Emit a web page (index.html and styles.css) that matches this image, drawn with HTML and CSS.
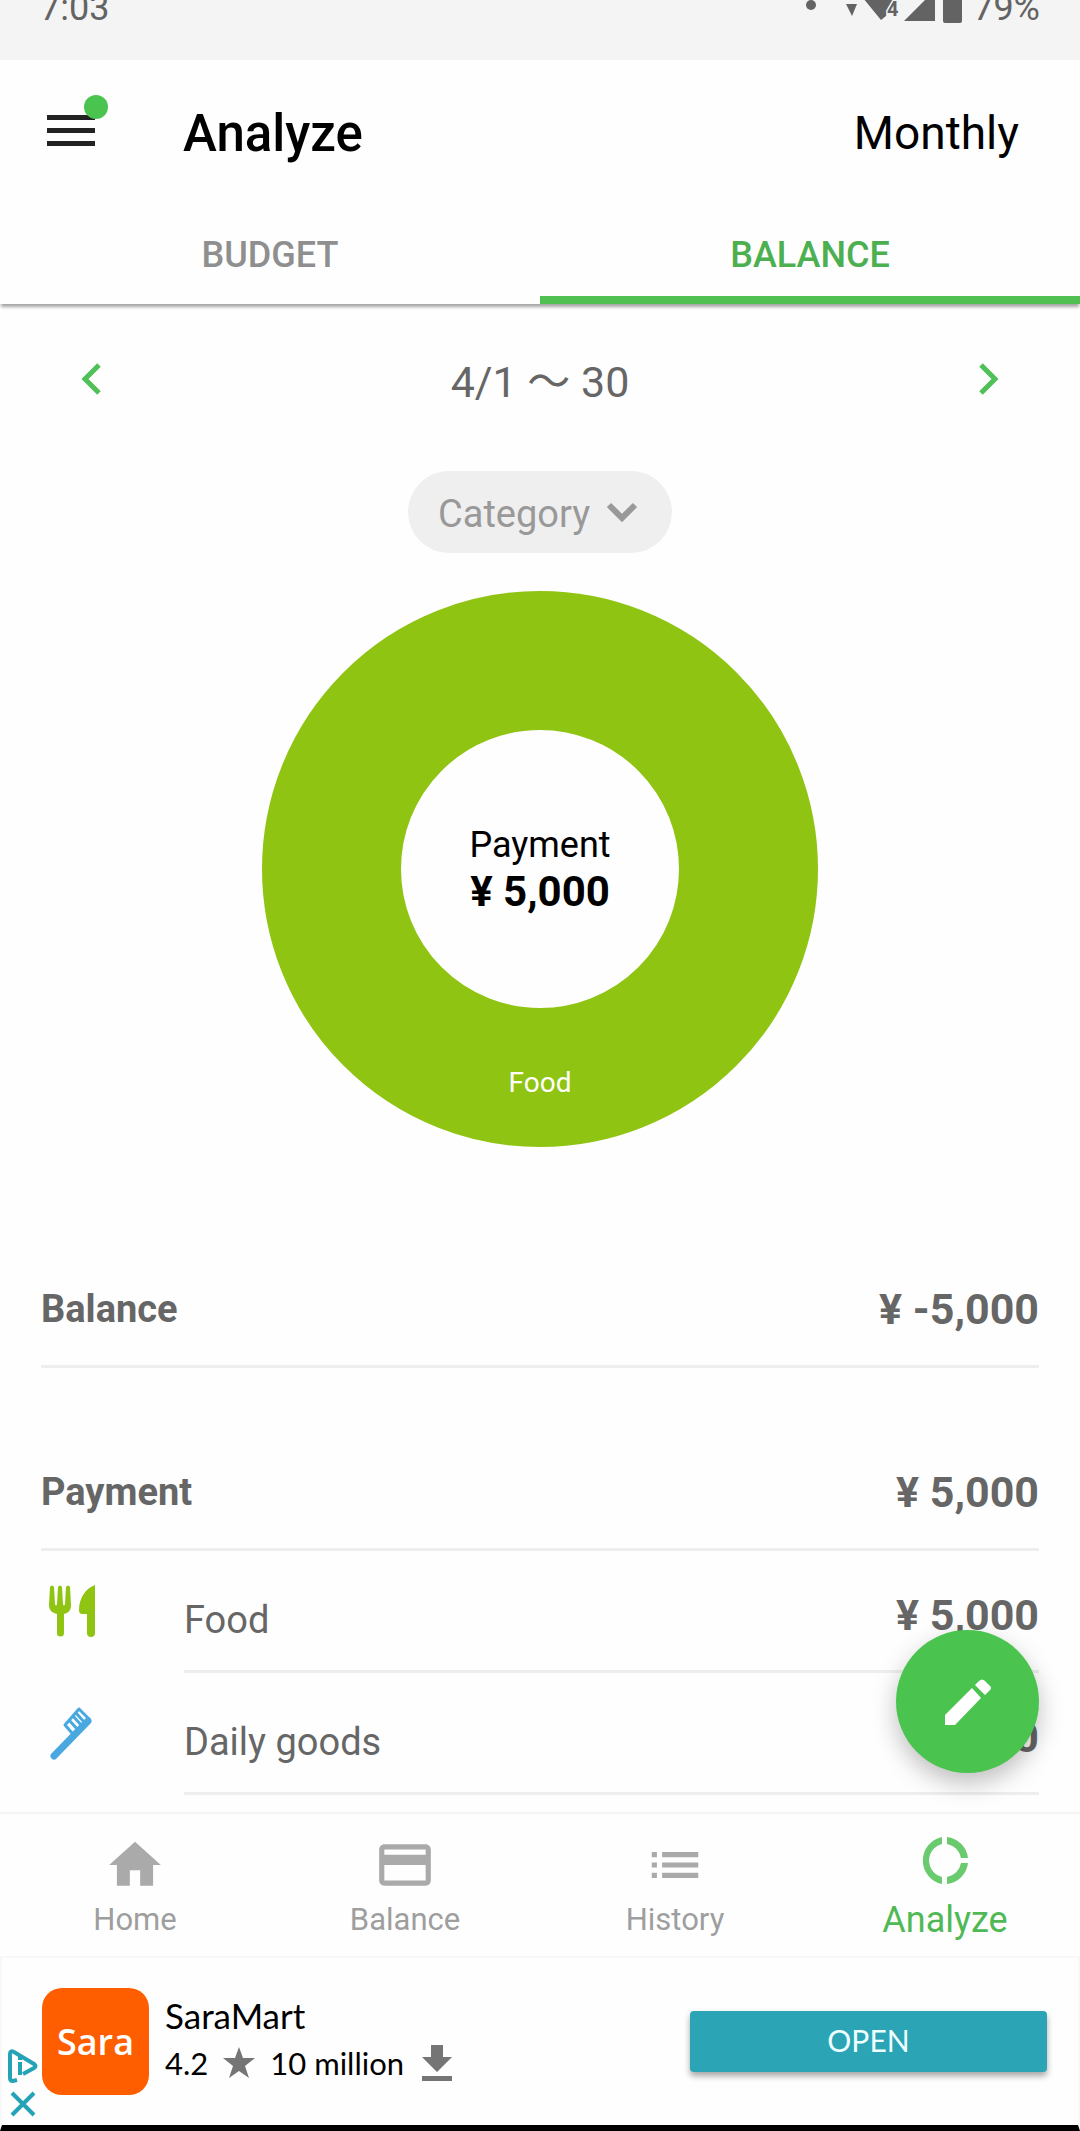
FILE: index.html
```html
<!DOCTYPE html>
<html lang="en">
<head>
    <meta charset="UTF-8">
    <meta name="viewport" content="width=device-width, initial-scale=1.0">
    <title>Analyze</title>
    <link rel="stylesheet" href="styles.css">
</head>
<body>
    <div class="status-bar">
        <span>7:03</span>
        <div class="status-right">
            <svg class="status-icons" viewBox="0 0 160 24" aria-hidden="true">
                <circle cx="6" cy="5" r="5"/>
                <path d="M41 4h11l-5 12z"/>
                <path d="M58 -2h36l-6 9-5 2-2 7-5 4z"/>
                <text x="82" y="16">4</text>
                <path d="M130 21H99L130 -10z"/>
                <path d="M138 -4h19v25a2 2 0 0 1-2 2h-15a2 2 0 0 1-2-2z"/>
            </svg>
            <span>79%</span>
        </div>
    </div>

    <header class="app-header">
        <button class="menu-btn" aria-label="Menu">
            <svg viewBox="0 0 48 48"><path d="M0 6h48v5H0zM0 19h48v5H0zM0 32h48v5H0z"/></svg>
            <span class="badge"></span>
        </button>
        <h1>Analyze</h1>
        <button class="range-btn">Monthly</button>
    </header>

    <div class="tabs" role="tablist">
        <button class="tab" role="tab" aria-selected="false">BUDGET</button>
        <button class="tab active" role="tab" aria-selected="true">BALANCE</button>
    </div>

    <main>
        <div class="period">
            <button aria-label="Previous">
                <svg viewBox="0 0 64 64"><path d="M40 19 26 33l14 14"/></svg>
            </button>
            <span>4/1 〜 30</span>
            <button aria-label="Next">
                <svg viewBox="0 0 64 64"><path d="M24 19l14 14-14 14"/></svg>
            </button>
        </div>

        <div class="group-by">
            <select aria-label="Group by">
                <option>Category</option>
            </select>
            <svg viewBox="0 0 32 20" aria-hidden="true"><path d="M3 3l13 13L29 3"/></svg>
        </div>

        <div class="donut">
            <span class="donut-title">Payment</span>
            <strong class="donut-total">¥ 5,000</strong>
            <span class="donut-label">Food</span>
        </div>

        <section class="summary">
            <h2>Balance</h2>
            <strong>¥ -5,000</strong>
        </section>
        <section class="summary">
            <h2>Payment</h2>
            <strong>¥ 5,000</strong>
        </section>

        <ul class="categories">
            <li>
                <svg viewBox="0 0 64 64" aria-hidden="true">
                    <path fill="#8fc412" d="M9 7q2-3 4 0l1 17q1 3 2 0l1-17q2-3 4 0l1 17q1 3 2 0l1-17q2-3 4 0l1 18c0 6-3 8-7 9v19a3 3 0 0 1-7 0V34c-4-1-8-3-8-9z"/>
                    <path fill="#8fc412" d="M54 5v48a3 3 0 0 1-8 0V34h-5q-3 0-3-4C38 18 45 8 54 5z"/>
                </svg>
                <div class="category">
                    <span>Food</span>
                    <strong>¥ 5,000</strong>
                </div>
            </li>
            <li>
                <svg viewBox="0 0 64 64" aria-hidden="true">
                    <path fill="none" stroke="#4aa8e0" stroke-width="7" stroke-linecap="round" d="M13 54 47 19"/>
                    <path fill="none" stroke="#4aa8e0" stroke-width="3" stroke-linejoin="round" d="M31 31 24 23 38 7 49 18M28 18l9 10M32 14l9 10M35 11l9 10"/>
                </svg>
                <div class="category">
                    <span>Daily goods</span>
                    <strong>¥ 0</strong>
                </div>
            </li>
        </ul>

        <button class="fab" aria-label="Add entry">
            <svg viewBox="0 0 64 64"><path d="M9 55V45L36 18l9 10-26 27zM39 15l4-4q3-3 6 0l5 5q2 2 0 4l-5 5z"/></svg>
        </button>
    </main>

    <nav class="bottom-nav">
        <a href="#home">
            <svg viewBox="0 0 24 24"><path d="M10 20v-6h4v6h5v-8h3L12 3 2 12h3v8z"/></svg>
            Home
        </a>
        <a href="#balance">
            <svg viewBox="0 0 24 24"><path d="M20 4H4c-1.100 0-2 .9-2 2v12c0 1.100.9 2 2 2h16c1.100 0 2-.9 2-2V6c0-1.100-.9-2-2-2zm0 14H4v-6h16v6zm0-10H4V6h16v2z"/></svg>
            Balance
        </a>
        <a href="#history">
            <svg viewBox="0 0 24 24"><path d="M3 13h2v-2H3v2zm0 4h2v-2H3v2zm0-8h2V7H3v2zm4 4h14v-2H7v2zm0 4h14v-2H7v2zM7 7v2h14V7H7z"/></svg>
            History
        </a>
        <a href="#analyze" class="active">
            <svg viewBox="0 0 62 62"><path d="M28 3v7a17 17 0 0 0 0 33v7a24 24 0 0 1 0-47zM33 3a24 24 0 0 1 21 21h-7a17 17 0 0 0-14-14zM54 29a24 24 0 0 1-21 21v-7a17 17 0 0 0 14-14z"/></svg>
            Analyze
        </a>
    </nav>

    <aside class="ad">
        <div class="ad-marks">
            <a href="#adchoices" aria-label="AdChoices">
                <svg viewBox="0 0 30 34"><path d="M9 31l-4 1q-3 0-3-3V5q0-4 4-2l20 12q3 2 0 4L15 25"/><path d="M12 8v3M10 15h2v11"/></svg>
            </a>
            <button aria-label="Close ad">
                <svg viewBox="0 0 30 34"><path d="M4 6l22 22M26 6 4 28"/></svg>
            </button>
        </div>
        <div class="ad-logo">Sara</div>
        <div class="ad-text">
            <div>SaraMart</div>
            <div class="ad-stats">
                <span>4.2</span>
                <svg class="star" viewBox="0 0 34 34" aria-hidden="true"><path d="M17 1l4 11h12l-10 8 4 12-10-7-10 7 4-12L1 12h12z"/></svg>
                <span>10 million</span>
                <svg class="download" viewBox="0 0 30 36" aria-hidden="true"><path d="M9 0h12v12h9L15 27 0 12h9zM0 31h30v5H0z"/></svg>
            </div>
        </div>
        <button class="open-btn">OPEN</button>
    </aside>
</body>
</html>
```
FILE: styles.css
```css
* { box-sizing: border-box; }
body {
    display: flex;
    flex-direction: column;
    min-height: 100vh;
    margin: 0;
    background: #fefefe;
    color: #666;
    font-family: Roboto, "Noto Sans CJK JP", sans-serif;
}
button {
    padding: 0;
    border: none;
    background: none;
    color: inherit;
    font: inherit;
    cursor: pointer;
}
a { color: inherit; text-decoration: none; }
svg { display: block; }

.status-bar {
    display: flex;
    justify-content: space-between;
    height: 60px;
    padding: 0 40px;
    background: #f4f4f4;
    color: #636363;
    font-size: 36px;
    line-height: 16px;
}
.status-right { display: flex; gap: 8px; }
.status-icons { width: 160px; height: 24px; fill: #636363; }
.status-icons text {
    font-size: 20px;
    font-weight: 700;
    stroke: #f4f4f4;
    stroke-width: 3px;
    paint-order: stroke;
}

.app-header {
    display: flex;
    align-items: center;
    height: 146px;
    padding: 0 61px 0 47px;
    color: #000;
}
.menu-btn { position: relative; width: 48px; }
.menu-btn svg { width: 48px; height: 48px; fill: #222; }
.badge {
    position: absolute;
    top: -14px;
    right: -13px;
    width: 24px;
    height: 24px;
    border-radius: 50%;
    background: #4ac44f;
}
h1 {
    flex: 1;
    margin: 0 0 0 88px;
    font-size: 51px;
    font-weight: 500;
}
.range-btn { font-size: 46px; }

.tabs {
    display: flex;
    height: 98px;
    box-shadow: 0 4px 3px -1px rgba(0, 0, 0, 0.35);
}
.tab {
    flex: 1;
    border-top: 8px solid transparent;
    border-bottom: 8px solid transparent;
    color: #8f8f8f;
    font-size: 36px;
    font-weight: 500;
}
.tab.active { border-bottom-color: #50c053; color: #4caf50; }

main { position: relative; flex: 1; padding: 15px 41px 0; }
.period {
    display: flex;
    align-items: center;
    justify-content: space-between;
    height: 118px;
    padding: 0 18px;
    font-size: 43px;
}
.period svg {
    width: 64px;
    height: 64px;
    fill: none;
    stroke: #50c058;
    stroke-width: 5;
}

.group-by { display: grid; width: 264px; margin: 34px auto 0; align-items: center; }
.group-by select, .group-by svg { grid-area: 1 / 1; }
.group-by select {
    height: 82px;
    padding: 4px 30px 0;
    border: none;
    border-radius: 41px;
    background: #efefef;
    color: #999;
    font: 38px Roboto, sans-serif;
    appearance: none;
}
.group-by svg {
    justify-self: end;
    width: 32px;
    height: 20px;
    margin-right: 34px;
    fill: none;
    stroke: #999;
    stroke-width: 6;
    pointer-events: none;
}

.donut {
    position: relative;
    display: flex;
    flex-direction: column;
    align-items: center;
    justify-content: center;
    width: 556px;
    height: 556px;
    margin: 38px auto 106px;
    border: 139px solid #8fc412;
    border-radius: 50%;
    color: #000;
}
.donut-title { font-size: 36px; line-height: 46px; }
.donut-total { font-size: 42px; line-height: 48px; }
.donut-label {
    position: absolute;
    bottom: -92px;
    color: #fff;
    font-size: 28px;
    line-height: 34px;
}

.summary {
    display: flex;
    align-items: center;
    justify-content: space-between;
    height: 115px;
    margin-bottom: 68px;
    border-bottom: 3px solid #eee;
}
.summary h2 { margin: 0; font-size: 38px; }
.summary strong, .category strong { font-size: 43px; }
.categories { margin: -68px 0 0; padding: 0; list-style: none; }
.categories li { display: flex; align-items: center; }
.categories svg { width: 64px; height: 64px; }
.category {
    display: flex;
    flex: 1;
    justify-content: space-between;
    height: 122px;
    margin-left: 79px;
    border-bottom: 3px solid #eee;
    font-size: 38px;
    line-height: 138px;
}
.category strong { line-height: 128px; }

.fab {
    position: absolute;
    right: 41px;
    bottom: 39px;
    display: flex;
    align-items: center;
    justify-content: center;
    width: 143px;
    height: 143px;
    border-radius: 50%;
    background: #4ac44f;
    box-shadow: 0 10px 24px rgba(0, 0, 0, 0.25);
}
.fab svg { width: 64px; height: 64px; fill: #fff; }

.bottom-nav {
    position: relative;
    display: flex;
    height: 144px;
    border-top: 2px solid #f5f5f5;
    background: #fefefe;
}
.bottom-nav a {
    display: flex;
    flex: 1;
    flex-direction: column;
    align-items: center;
    gap: 4px;
    padding-top: 20px;
    color: #9e9e9e;
    font-size: 31px;
    line-height: 40px;
}
.bottom-nav svg { width: 62px; height: 62px; fill: #aaa; }
.bottom-nav .active { color: #50b955; font-size: 36px; }
.bottom-nav .active svg { fill: #69ca6e; }

.ad {
    display: flex;
    align-items: center;
    height: 175px;
    padding: 0 31px 0 6px;
    border: 2px solid #f8f8f8;
    border-bottom: 6px solid #000;
    color: #000;
    font-family: Lato, sans-serif;
    font-size: 35px;
    line-height: 48px;
}
.ad-marks {
    display: flex;
    flex-direction: column;
    align-self: flex-end;
    gap: 4px;
    width: 34px;
    padding-bottom: 4px;
}
.ad-marks svg {
    width: 30px;
    height: 34px;
    fill: none;
    stroke: #24a2b6;
    stroke-width: 4;
}
.ad-logo {
    width: 107px;
    height: 107px;
    margin-right: 16px;
    border-radius: 20px;
    background: #ff5e00;
    color: #fff;
    font-family: "Open Sans", sans-serif;
    font-size: 36px;
    font-weight: 600;
    line-height: 107px;
    text-align: center;
}
.ad-text { flex: 1; padding-bottom: 6px; }
.ad-stats { display: flex; align-items: center; font-size: 31px; }
.ad-stats svg { fill: #757575; }
.star { width: 34px; height: 34px; margin: 0 14px; }
.download { width: 30px; height: 36px; margin-left: 18px; }
.open-btn {
    width: 357px;
    height: 61px;
    padding-bottom: 4px;
    border-radius: 4px;
    background: #2ba4b6;
    box-shadow: 0 4px 6px rgba(0, 0, 0, 0.35);
    color: #eff;
    font-size: 30px;
}
```
